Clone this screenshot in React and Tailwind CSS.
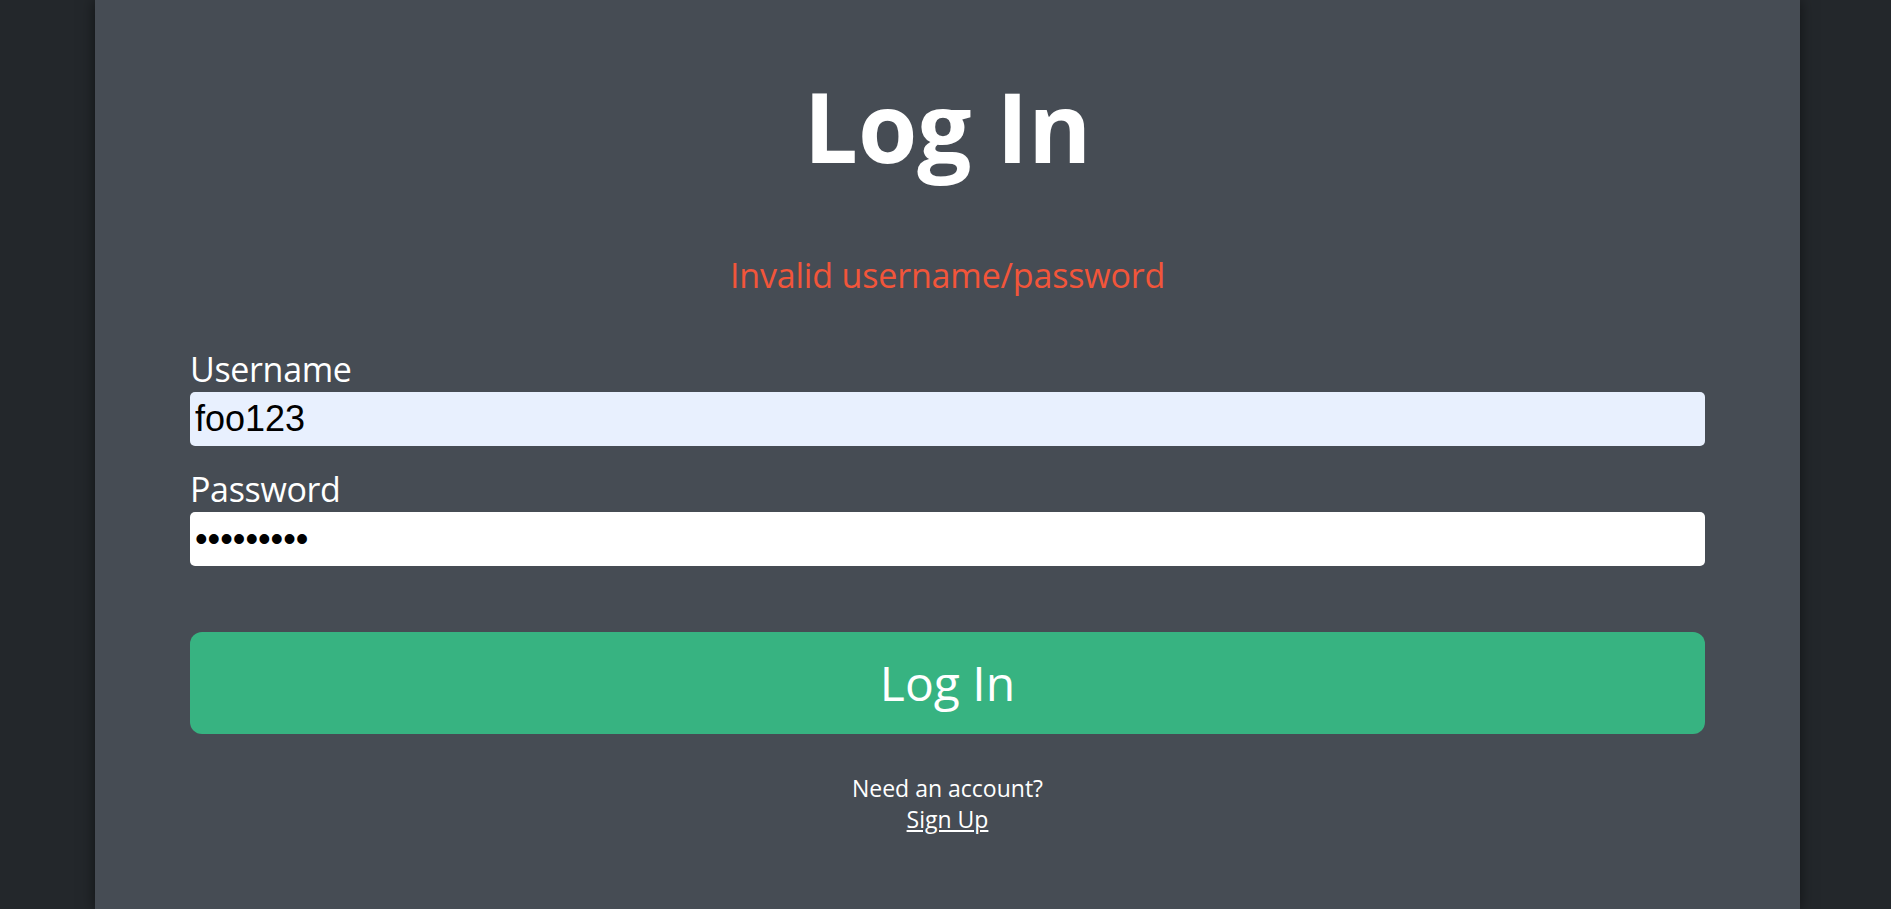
import { useState } from "react";

export default function App() {
  const [username, setUsername] = useState("foo123");
  const [password, setPassword] = useState("123456789");

  return (
    <div className="min-h-screen bg-[#23272b] font-['Open_Sans',sans-serif]">
      <div className="ml-[95px] min-h-screen w-[1705px] bg-[#464c54] px-[95px] pt-[78px] shadow-[0_0_14px_rgba(0,0,0,0.55)]">
        <h1 className="text-center text-[96px] font-bold leading-[96px] text-white">
          Log In
        </h1>

        <p className="mt-[83px] text-center text-[34px] leading-[36px] tracking-[-0.005em] text-[#f2553a]">
          Invalid username/password
        </p>

        <form className="mt-[58px]" onSubmit={(e) => e.preventDefault()}>
          <label className="block text-[34px] leading-[36px] tracking-[-0.01em] text-white">
            Username
          </label>
          <input
            type="text"
            value={username}
            onChange={(e) => setUsername(e.target.value)}
            className="mt-[5px] block h-[54px] w-full rounded-[5px] bg-[#e8f0fe] px-[5px] font-['Liberation_Sans',sans-serif] text-[36px] text-black outline-none"
          />

          <label className="mt-[25px] block text-[34px] leading-[36px] tracking-[-0.01em] text-white">
            Password
          </label>
          <input
            type="password"
            value={password}
            onChange={(e) => setPassword(e.target.value)}
            className="mt-[5px] block h-[54px] w-full rounded-[5px] bg-white px-[5px] font-['Liberation_Sans',sans-serif] text-[36px] text-black outline-none"
          />

          <button
            type="submit"
            className="mt-[66px] flex h-[102px] w-full items-center justify-center rounded-xl bg-[#37b381] text-[48px] leading-[48px] text-white"
          >
            Log In
          </button>
        </form>

        <div className="mt-[39px] text-center text-[23px] leading-[31px] text-white">
          <p>Need an account?</p>
          <a href="#" className="underline">
            Sign Up
          </a>
        </div>
      </div>
    </div>
  );
}
